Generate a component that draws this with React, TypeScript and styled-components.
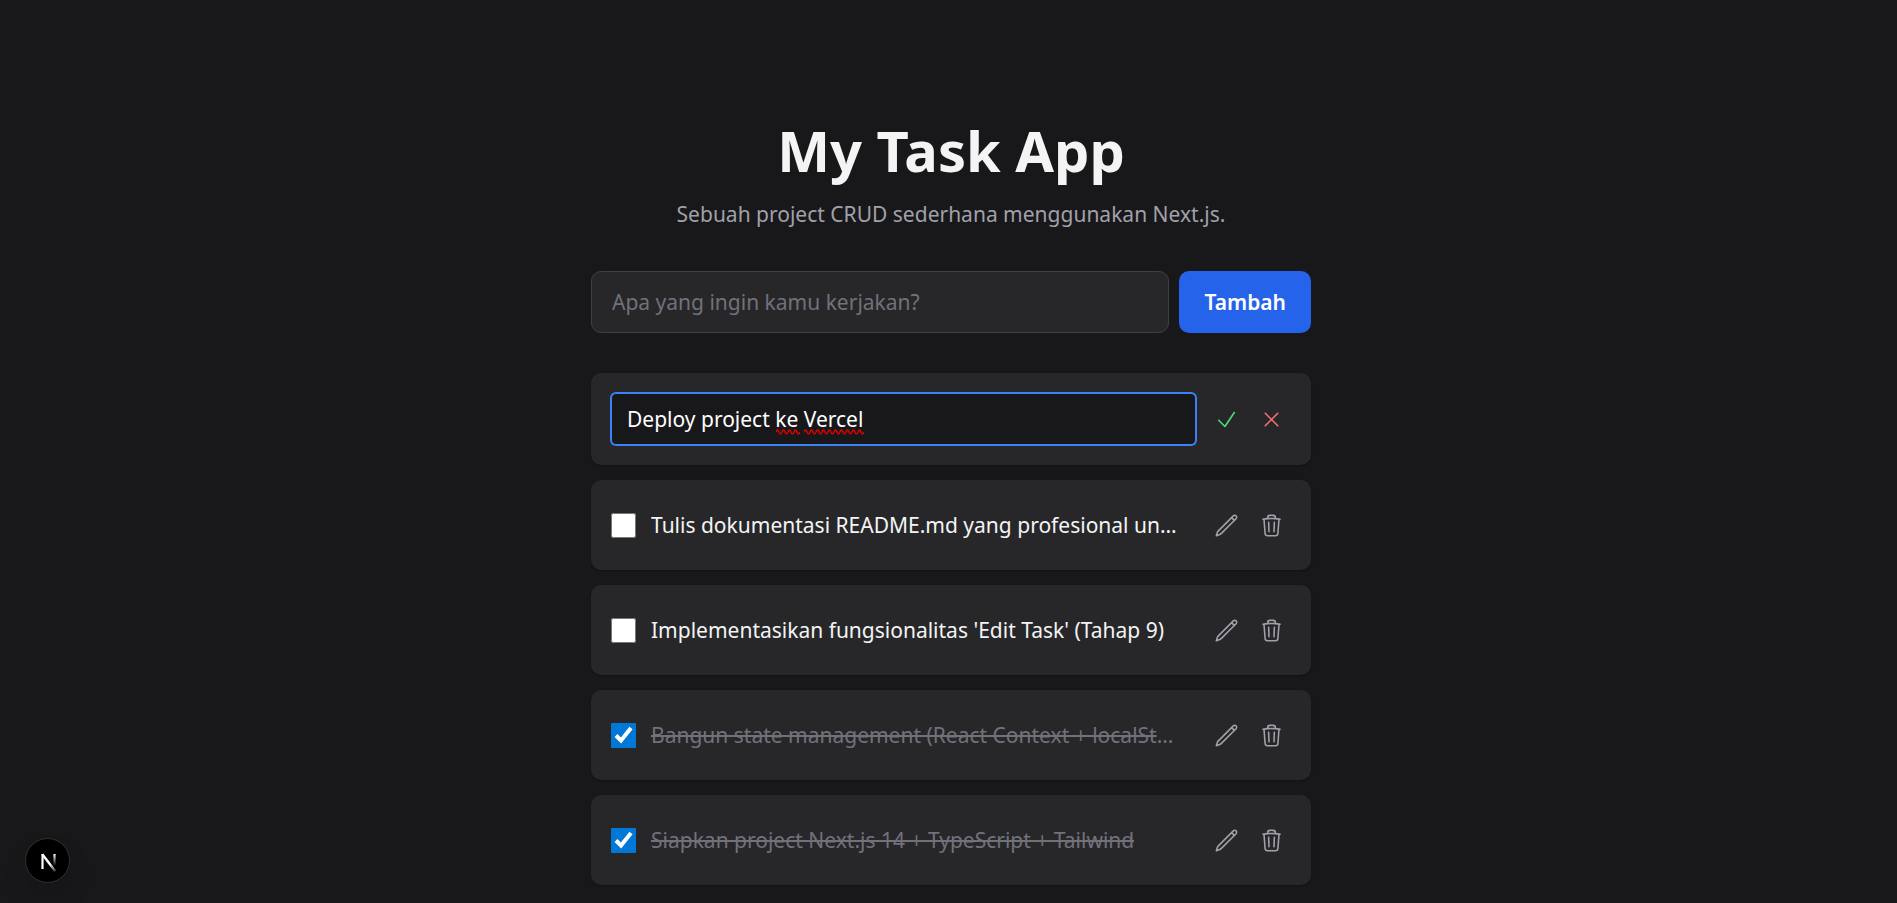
import React, { useState } from 'react';
import styled, { createGlobalStyle, css } from 'styled-components';

const font = '"Noto Sans", "Open Sans", sans-serif';

const GlobalStyle = createGlobalStyle`
  *, *::before, *::after { box-sizing: border-box; }
  body {
    margin: 0;
    background: #18181b;
    color: #f4f4f5;
    font-family: ${font};
    font-size: 21px;
    line-height: 30px;
  }
  h1, p, ul { margin: 0; padding: 0; }
  button, input { font: inherit; }
`;

const Page = styled.main`
  min-height: 100vh;
  display: flex;
  justify-content: center;
  padding: 120px 20px 18px 25px;
`;

const Column = styled.div`
  width: 100%;
  max-width: 720px;
  display: flex;
  flex-direction: column;
`;

const Header = styled.header`
  display: flex;
  flex-direction: column;
  gap: 19px;
  text-align: center;
`;

const Title = styled.h1`
  font-size: 56px;
  line-height: 60px;
  font-weight: 700;
`;

const Subtitle = styled.p`
  color: #a1a1aa;
`;

const AddForm = styled.form`
  display: flex;
  gap: 10px;
  margin-top: 42px;
`;

const NewTaskInput = styled.input`
  flex: 1;
  min-width: 0;
  height: 62px;
  padding: 0 20px;
  border: 1px solid #3f3f46;
  border-radius: 10px;
  background: #27272a;
  color: #f4f4f5;
  outline: none;
  &::placeholder { color: #71717a; }
`;

const AddButton = styled.button`
  padding: 0 25px;
  border: 0;
  border-radius: 10px;
  background: #2563eb;
  color: #fff;
  font-weight: 600;
  cursor: pointer;
`;

const TaskList = styled.ul`
  list-style: none;
  display: flex;
  flex-direction: column;
  gap: 15px;
  margin-top: 40px;
`;

const TaskCard = styled.li`
  display: flex;
  align-items: center;
  gap: 25px;
  min-height: 90px;
  padding: 20px;
  border-radius: 10px;
  background: #27272a;
  box-shadow: 0 1px 2px rgba(0, 0, 0, 0.3);
`;

const EditCard = styled(TaskCard)`
  gap: 10px;
`;

const EditField = styled.div`
  position: relative;
  flex: 1;
  min-width: 0;
`;

const EditInput = styled.input`
  display: block;
  width: 100%;
  height: 52px;
  padding: 0 15px;
  border: 1px solid #3b82f6;
  border-radius: 5px;
  background: #18181b;
  color: #fff;
  outline: none;
  box-shadow: 0 0 0 1px #3b82f6;
`;

const Squiggle = styled.svg<{ $left: number }>`
  position: absolute;
  left: ${({ $left }) => $left}px;
  top: 36px;
  pointer-events: none;
`;

const Label = styled.label`
  flex: 1;
  min-width: 0;
  display: flex;
  align-items: center;
  gap: 15px;
`;

const Check = styled.input`
  flex: none;
  width: 25px;
  height: 25px;
  margin: 0;
  accent-color: #0078d7;
`;

const TaskText = styled.span<{ $done: boolean }>`
  min-width: 0;
  overflow: hidden;
  white-space: nowrap;
  text-overflow: ellipsis;
  ${({ $done }) => $done && css`
    color: #71717a;
    text-decoration: line-through;
  `}
`;

const Actions = styled.div`
  display: flex;
  gap: 5px;
`;

const IconButton = styled.button<{ $tone?: string }>`
  display: grid;
  place-items: center;
  width: 40px;
  height: 40px;
  padding: 0;
  border: 0;
  border-radius: 20px;
  background: transparent;
  color: ${({ $tone }) => $tone ?? '#a1a1aa'};
  cursor: pointer;
`;

const DevBadge = styled.button`
  position: fixed;
  left: 25px;
  bottom: 20px;
  display: grid;
  place-items: center;
  width: 45px;
  height: 45px;
  padding: 0;
  border: 1px solid #303030;
  border-radius: 50%;
  background: #000;
  box-shadow: 0 16px 32px -8px rgba(0, 0, 0, 0.24);
`;

const icons = {
  check: 'm4.5 12.75 6 6 9-13.5',
  close: 'M6 18 18 6M6 6l12 12',
  pencil:
    'm16.862 4.487 1.687-1.688a1.875 1.875 0 1 1 2.652 2.652L6.832 19.82a4.5 4.5 0 0 1-1.897 1.13l-2.685.8.8-2.685a4.5 4.5 0 0 1 1.13-1.897L16.863 4.487Zm0 0L19.5 7.125',
  trash:
    'm14.74 9-.346 9m-4.788 0L9.26 9m9.968-3.21c.342.052.682.107 1.022.166m-1.022-.165L18.16 19.673a2.25 2.25 0 0 1-2.244 2.077H8.084a2.25 2.25 0 0 1-2.244-2.077L4.772 5.79m14.456 0a48.108 48.108 0 0 0-3.478-.397m-12 .562c.34-.059.68-.114 1.022-.165m0 0a48.11 48.11 0 0 1 3.478-.397m7.5 0v-.916c0-1.18-.91-2.164-2.09-2.201a51.964 51.964 0 0 0-3.32 0c-1.18.037-2.09 1.022-2.09 2.201v.916m7.5 0a48.667 48.667 0 0 0-7.5 0',
};

function Icon({ name }: { name: keyof typeof icons }) {
  return (
    <svg width="25" height="25" viewBox="0 0 24 24" fill="none" stroke="currentColor"
      strokeWidth="1.5" strokeLinecap="round" strokeLinejoin="round" aria-hidden="true">
      <path d={icons[name]} />
    </svg>
  );
}

function SpellMark({ left, width }: { left: number; width: number }) {
  let d = 'M0 3';
  for (let x = 0; x < width; x += 6) d += 'q1.5 -4 3 0t3 0';
  return (
    <Squiggle $left={left} width={width} height="6" aria-hidden="true">
      <path d={d} fill="none" stroke="#e00000" strokeWidth="1.5" />
    </Squiggle>
  );
}

function NextLogo() {
  return (
    <svg width="45" height="45" viewBox="0 0 45 45" fill="none" aria-hidden="true">
      <defs>
        <linearGradient id="stem" x1="0" y1="15" x2="0" y2="27" gradientUnits="userSpaceOnUse">
          <stop stopColor="#fff" />
          <stop offset="1" stopColor="#fff" stopOpacity="0" />
        </linearGradient>
        <linearGradient id="diagonal" x1="24" y1="25" x2="31" y2="34" gradientUnits="userSpaceOnUse">
          <stop stopColor="#fff" />
          <stop offset="1" stopColor="#fff" stopOpacity="0" />
        </linearGradient>
      </defs>
      <path d="M16.5 30V15" stroke="#fff" strokeWidth="2.2" />
      <path d="M16.3 15.2 29.3 32.2" stroke="url(#diagonal)" strokeWidth="2.4" />
      <path d="M28.5 15v12" stroke="url(#stem)" strokeWidth="2.2" />
    </svg>
  );
}

const initialTasks = [
  { id: 2, text: 'Tulis dokumentasi README.md yang profesional untuk project ini', done: false },
  { id: 3, text: "Implementasikan fungsionalitas 'Edit Task' (Tahap 9)", done: false },
  { id: 4, text: 'Bangun state management (React Context + localStorage)', done: true },
  { id: 5, text: 'Siapkan project Next.js 14 + TypeScript + Tailwind', done: true },
];

const initialEdit = 'Deploy project ke Vercel';

export default function App() {
  const [tasks, setTasks] = useState(initialTasks);
  const [draft, setDraft] = useState('');
  const [edit, setEdit] = useState(initialEdit);

  const toggle = (id: number) =>
    setTasks(tasks.map((t) => (t.id === id ? { ...t, done: !t.done } : t)));

  const add = (event: React.FormEvent) => {
    event.preventDefault();
    if (!draft.trim()) return;
    setTasks([{ id: Date.now(), text: draft, done: false }, ...tasks]);
    setDraft('');
  };

  return (
    <>
      <GlobalStyle />
      <Page>
        <Column>
          <Header>
            <Title>My Task App</Title>
            <Subtitle>Sebuah project CRUD sederhana menggunakan Next.js.</Subtitle>
          </Header>
          <AddForm onSubmit={add}>
            <NewTaskInput
              aria-label="Tugas baru"
              placeholder="Apa yang ingin kamu kerjakan?"
              value={draft}
              onChange={(e) => setDraft(e.target.value)}
            />
            <AddButton type="submit">Tambah</AddButton>
          </AddForm>
          <TaskList>
            <EditCard>
              <EditField>
                <EditInput aria-label="Edit tugas" value={edit} onChange={(e) => setEdit(e.target.value)} />
                {edit === initialEdit && (
                  <>
                    <SpellMark left={165} width={24} />
                    <SpellMark left={193} width={60} />
                  </>
                )}
              </EditField>
              <Actions>
                <IconButton type="button" aria-label="Simpan" $tone="#4ade80"><Icon name="check" /></IconButton>
                <IconButton type="button" aria-label="Batal" $tone="#f87171"><Icon name="close" /></IconButton>
              </Actions>
            </EditCard>
            {tasks.map((task) => (
              <TaskCard key={task.id}>
                <Label>
                  <Check type="checkbox" checked={task.done} onChange={() => toggle(task.id)} />
                  <TaskText $done={task.done}>{task.text}</TaskText>
                </Label>
                <Actions>
                  <IconButton type="button" aria-label="Edit"><Icon name="pencil" /></IconButton>
                  <IconButton type="button" aria-label="Hapus" onClick={() => setTasks(tasks.filter((t) => t.id !== task.id))}>
                    <Icon name="trash" />
                  </IconButton>
                </Actions>
              </TaskCard>
            ))}
          </TaskList>
        </Column>
      </Page>
      <DevBadge type="button" aria-label="Next.js Dev Tools"><NextLogo /></DevBadge>
    </>
  );
}
